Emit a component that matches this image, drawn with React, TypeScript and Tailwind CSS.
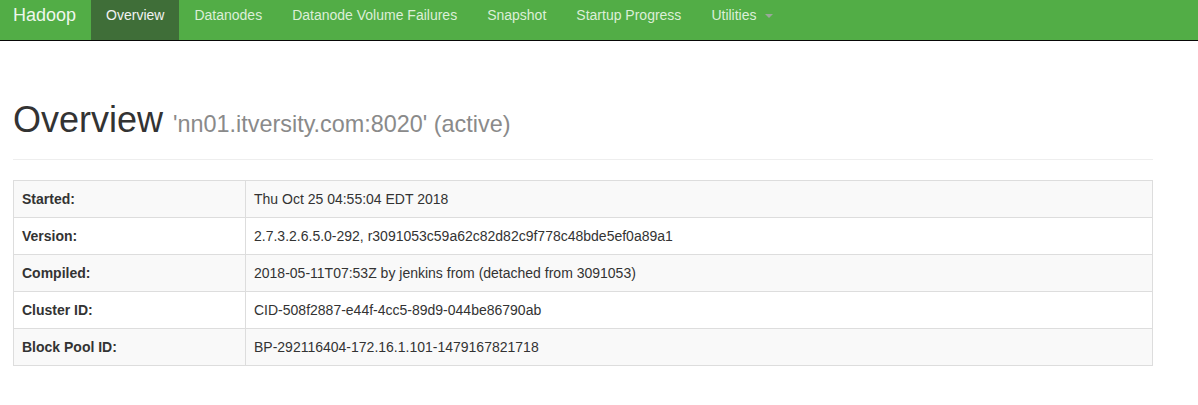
const navItems = [
  "Datanodes",
  "Datanode Volume Failures",
  "Snapshot",
  "Startup Progress",
];

const rows = [
  ["Started:", "Thu Oct 25 04:55:04 EDT 2018"],
  ["Version:", "2.7.3.2.6.5.0-292, r3091053c59a62c82d82c9f778c48bde5ef0a89a1"],
  ["Compiled:", "2018-05-11T07:53Z by jenkins from (detached from 3091053)"],
  ["Cluster ID:", "CID-508f2887-e44f-4cc5-89d9-044be86790ab"],
  ["Block Pool ID:", "BP-292116404-172.16.1.101-1479167821718"],
];

export default function App() {
  return (
    <div className="min-h-[405px] bg-white font-['Liberation_Sans',Arial,sans-serif] text-[14px] leading-[20px] text-[#333]">
      <nav className="flex h-[41px] border-b border-[#080808] bg-[#52ad46] pl-[13px]">
        <a className="h-[40px] pr-[15px] pt-[5px] text-[18px] leading-[20px] text-[#eef7ec]">Hadoop</a>
        <ul className="flex">
          <li className="h-[40px] bg-[#3f6e38] px-[15px] pt-[5px] text-[#f2f2f2]">Overview</li>
          {navItems.map((item) => (
            <li key={item} className="h-[40px] px-[15px] pt-[5px] text-[#dcefd8]">
              {item}
            </li>
          ))}
          <li className="flex h-[40px] items-start px-[15px] pt-[5px] text-[#dcefd8]">
            Utilities
            <span className="ml-[8px] mt-[9px] h-0 w-0 border-x-[4px] border-t-[4px] border-x-transparent border-t-[#9aa89a]" />
          </li>
        </ul>
      </nav>

      <main className="w-[1153px] pl-[13px] pt-[59px]">
        <div className="border-b border-[#eeeeee] pb-[15px]">
          <h1 className="text-[36px] leading-[40px] font-normal text-[#333]">
            Overview{" "}
            <small className="text-[23.4px] text-[#8a8a8a]">'nn01.itversity.com:8020' (active)</small>
          </h1>
        </div>

        <table className="mt-[20px] w-full border-collapse border border-[#dddddd]">
          <tbody>
            {rows.map(([label, value], i) => (
              <tr key={label} className={i % 2 === 0 ? "bg-[#f9f9f9]" : "bg-white"}>
                <th className="w-[232px] border border-[#dddddd] p-[8px] text-left font-bold">
                  {label}
                </th>
                <td className="border border-[#dddddd] p-[8px] text-left">{value}</td>
              </tr>
            ))}
          </tbody>
        </table>
      </main>
    </div>
  );
}
